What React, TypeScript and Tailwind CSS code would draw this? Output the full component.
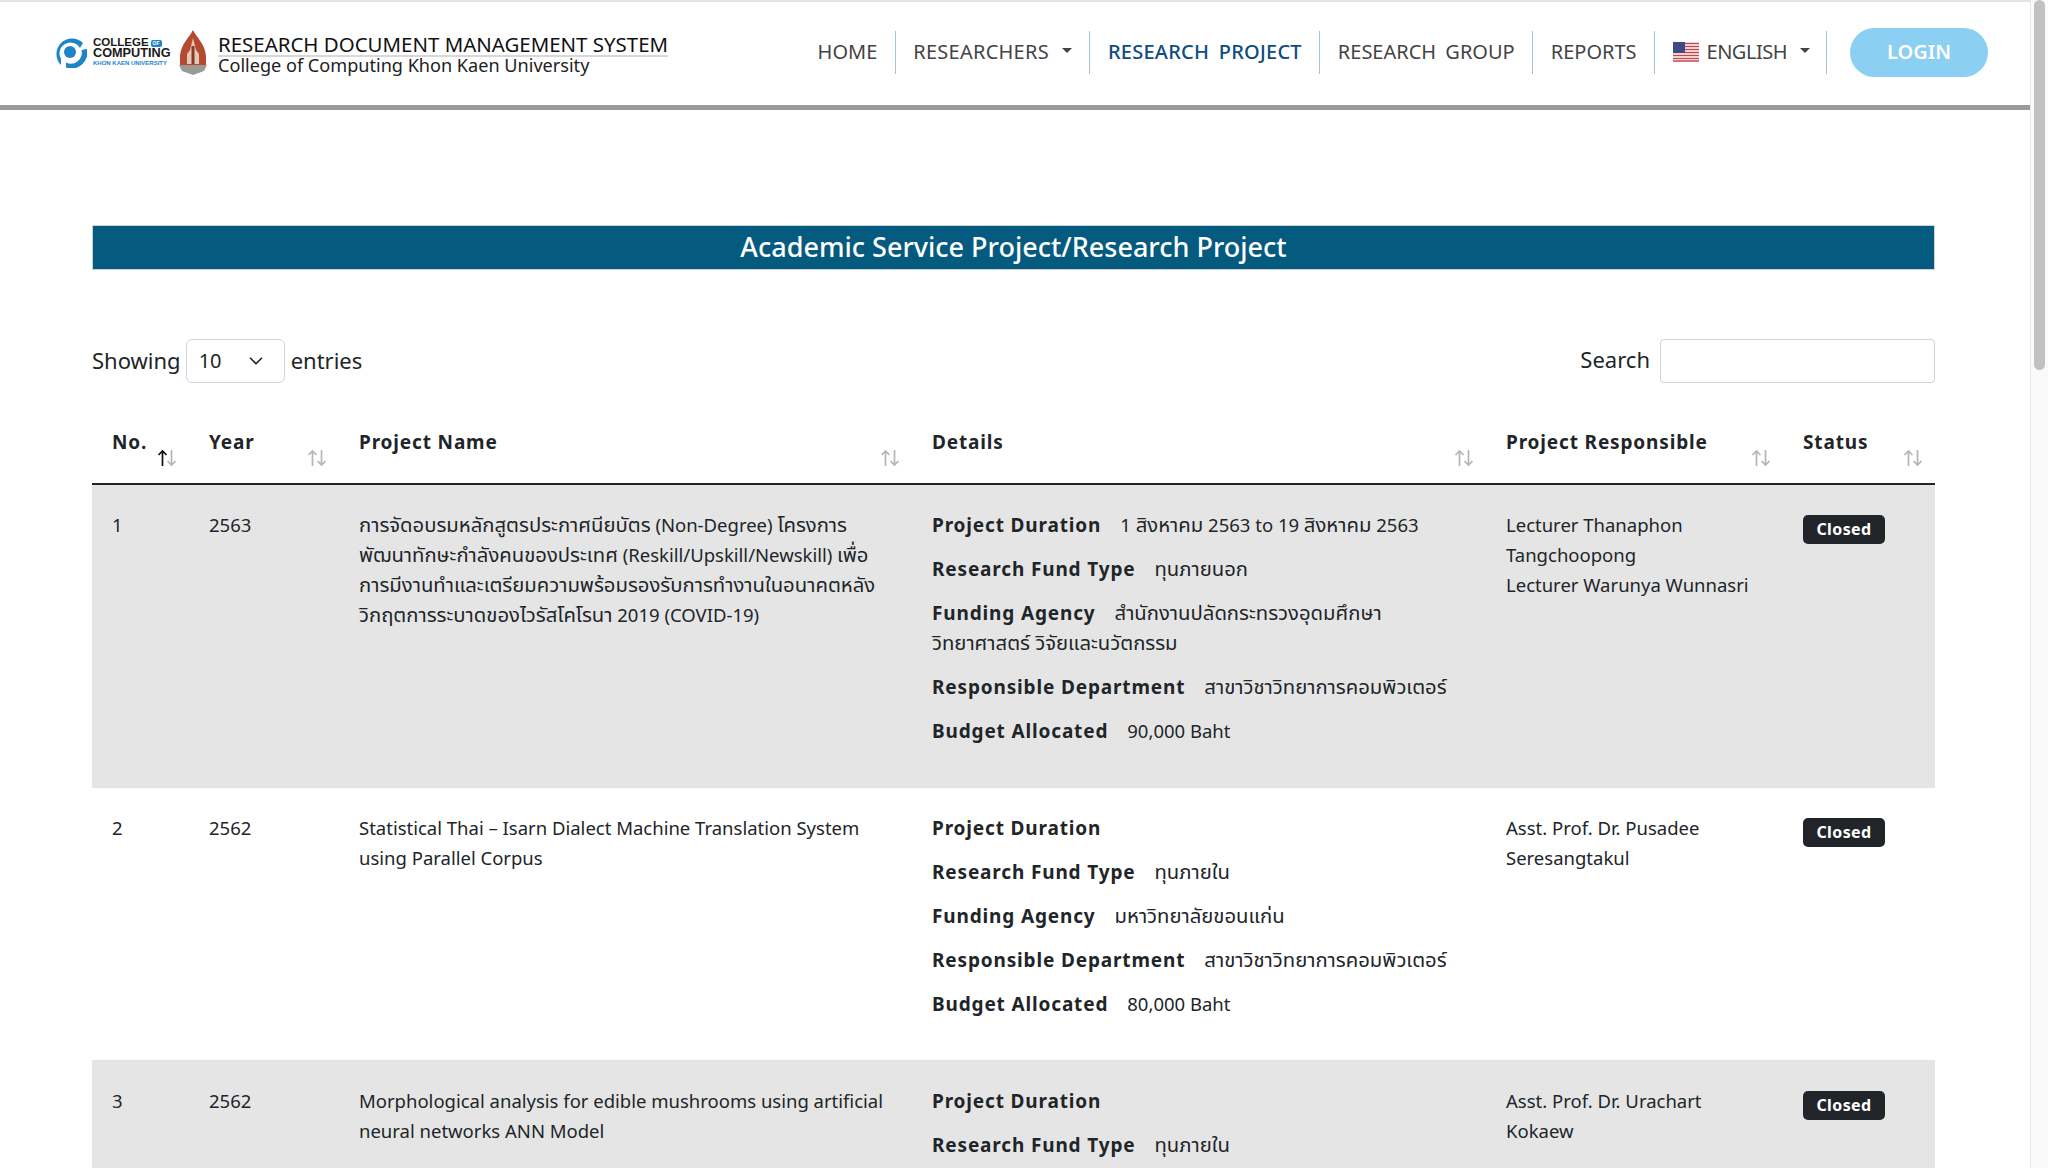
import { ChevronDown } from 'lucide-react'

const font = "font-['Noto_Sans','Noto_Sans_Thai','Liberation_Sans',sans-serif]"

const rows = [
  {
    no: '1',
    year: '2563',
    name: [
      'การจัดอบรมหลักสูตรประกาศนียบัตร (Non-Degree) โครงการ',
      'พัฒนาทักษะกำลังคนของประเทศ (Reskill/Upskill/Newskill) เพื่อ',
      'การมีงานทำและเตรียมความพร้อมรองรับการทำงานในอนาคตหลัง',
      'วิกฤตการระบาดของไวรัสโคโรนา 2019 (COVID-19)',
    ],
    details: [
      ['Project Duration', '1 สิงหาคม 2563 to 19 สิงหาคม 2563'],
      ['Research Fund Type', 'ทุนภายนอก'],
      ['Funding Agency', 'สำนักงานปลัดกระทรวงอุดมศึกษา วิทยาศาสตร์ วิจัยและนวัตกรรม'],
      ['Responsible Department', 'สาขาวิชาวิทยาการคอมพิวเตอร์'],
      ['Budget Allocated', '90,000 Baht'],
    ],
    people: ['Lecturer Thanaphon Tangchoopong', 'Lecturer Warunya Wunnasri'],
  },
  {
    no: '2',
    year: '2562',
    name: ['Statistical Thai – Isarn Dialect Machine Translation System', 'using Parallel Corpus'],
    details: [
      ['Project Duration', ''],
      ['Research Fund Type', 'ทุนภายใน'],
      ['Funding Agency', 'มหาวิทยาลัยขอนแก่น'],
      ['Responsible Department', 'สาขาวิชาวิทยาการคอมพิวเตอร์'],
      ['Budget Allocated', '80,000 Baht'],
    ],
    people: ['Asst. Prof. Dr. Pusadee Seresangtakul'],
  },
  {
    no: '3',
    year: '2562',
    name: ['Morphological analysis for edible mushrooms using artificial', 'neural networks ANN Model'],
    details: [
      ['Project Duration', ''],
      ['Research Fund Type', 'ทุนภายใน'],
    ],
    people: ['Asst. Prof. Dr. Urachart Kokaew'],
  },
]

// thai runs render smaller than in the reference font, so bump them up
function Mixed({ text }: { text: string }) {
  const parts = text.split(/([\u0E00-\u0E7F]+(?:\s[\u0E00-\u0E7F]+)*)/)
  return (
    <>
      {parts.map((p, i) =>
        /[\u0E00-\u0E7F]/.test(p) ? (
          <span key={i} className="text-[20.3px] leading-none">{p}</span>
        ) : (
          <span key={i}>{p}</span>
        ),
      )}
    </>
  )
}

function SortIcon({ active }: { active?: boolean }) {
  return (
    <svg width="22" height="18" viewBox="0 0 22 18" fill="none" strokeWidth="1.7" className="shrink-0 self-end mb-[2px]">
      <path d="M6.5 17V2M2.5 6 6.5 2l4 4" stroke={active ? '#111' : '#b5b5b5'} />
      <path d="M15.5 1v15M11.5 12l4 4 4-4" stroke="#b5b5b5" />
    </svg>
  )
}

function Logo() {
  return (
    <div className="flex items-center">
      <svg width="34" height="32" viewBox="0 0 34 32" className="shrink-0">
        <path d="M30 7A15.500 15.500 0 1 0 8 29V23A10 10 0 1 1 27 12Z" fill="#1d84c9" />
        <path d="M34 13A16 16 0 0 1 13 31.500V26.500A11 11 0 0 0 28.500 14Z" fill="#1d84c9" />
        <circle cx="17" cy="16" r="6" fill="#1d84c9" />
      </svg>
      <div className="ml-[6px] w-[77px] font-['Liberation_Sans',sans-serif] font-bold leading-none">
        <div className="flex items-center text-[11.500px] text-[#1a1a1a] h-[10px]">
          COLLEGE
          <span className="ml-[2px] bg-[#1d84c9] rounded-[2px] text-white text-[5px] px-[2px] h-[7px] leading-[7px]">OF</span>
        </div>
        <div className="text-[12.700px] text-[#1a1a1a] h-[11px] leading-[11px]">COMPUTING</div>
        <div className="text-[6px] text-[#1d84c9] mt-[1px] whitespace-nowrap">KHON KAEN UNIVERSITY</div>
      </div>
      <svg width="28" height="45" viewBox="0 0 28 45" className="ml-[9px] shrink-0">
        <path d="M14 0C18 8 26 14 27 26V36H1V26C2 14 10 8 14 0Z" fill="#b5492f" />
        <path d="M14 8l3 12 3 4v10H8V24l3-4Z" fill="#e5c9b8" />
        <path d="M12.500 16h3v18h-3Z" fill="#8c3a28" />
        <path d="M0 35h28l-3 6-11 4-11-4Z" fill="#9a9a96" />
      </svg>
      <div className="ml-[11px] text-[#222] pt-[3px]">
        <div className="text-[20.450px] leading-[22px] text-[#111] border-b-2 border-[#d8d8d8] whitespace-nowrap">
          RESEARCH DOCUMENT MANAGEMENT SYSTEM
        </div>
        <div className="text-[18.100px] leading-[17px] whitespace-nowrap">College of Computing Khon Kaen University</div>
      </div>
    </div>
  )
}

function NavItem({ label, active, caret, flag, extra }: { label: string; active?: boolean; caret?: boolean; flag?: boolean; extra?: string }) {
  return (
    <div className={`h-[43px] flex items-center px-[17.500px] text-[20px] [word-spacing:4px] whitespace-nowrap ${active ? 'font-medium text-[#0f4c81]' : 'text-[#444]'} ${extra ?? ''}`}>
      {flag && (
        <svg width="26" height="20" viewBox="0 0 26 20" className="mr-[8px]">
          <rect width="26" height="20" fill="#fff" />
          <path d="M0 1.500h26M0 4.500h26M0 7.500h26M0 10.500h26M0 13.500h26M0 16.500h26M0 19h26" stroke="#c8444c" strokeWidth="1.500" />
          <rect width="12" height="11" fill="#3c4a86" />
        </svg>
      )}
      {label}
      {caret && <span className="ml-[13px] mb-1 border-x-[5px] border-x-transparent border-t-[5px] border-t-[#444]" />}
    </div>
  )
}

export default function App() {
  return (
    <div className={`h-screen overflow-hidden flex bg-white text-[#212529] ${font}`}>
      <div className="flex-1 min-w-0 border-t-2 border-[#e4e4e4]">
        <header className="h-[108px] border-b-[5px] border-[#9a9a9a] flex items-center justify-between pl-[53px] pr-[42px] pb-[3px]">
          <Logo />
          <nav className="flex items-center">
            <NavItem label="HOME" />
            <div className="w-px h-[43px] bg-[#a9c2d6]" />
            <NavItem label="RESEARCHERS" caret extra="tracking-[0.25px]" />
            <div className="w-px h-[43px] bg-[#a9c2d6]" />
            <NavItem label="RESEARCH PROJECT" active extra="tracking-[0.25px]" />
            <div className="w-px h-[43px] bg-[#a9c2d6]" />
            <NavItem label="RESEARCH GROUP" />
            <div className="w-px h-[43px] bg-[#a9c2d6]" />
            <NavItem label="REPORTS" />
            <div className="w-px h-[43px] bg-[#a9c2d6]" />
            <NavItem label="ENGLISH" caret flag extra="tracking-[-0.5px] pr-[16px]" />
            <div className="w-px h-[43px] bg-[#a9c2d6]" />
            <button className="ml-[23px] w-[138px] h-[49px] rounded-full bg-[#8bd0f2] text-white font-semibold text-[20px]">LOGIN</button>
          </nav>
        </header>

        <main className="pl-[92px] pr-[95px] pt-[115px]">
          <h1 className="h-[45px] bg-[#045a7f] border border-[#c9d3d8] text-white text-center text-[27px] font-medium leading-[42px]">
            Academic Service Project/Research Project
          </h1>

          <div className="mt-[68px] h-[45px] flex items-center justify-between text-[22px]">
            <div className="flex items-center">
              <span>Showing</span>
              <div className="ml-[5px] mr-[6px] w-[99px] h-[44px] border border-[#ced4da] rounded-[6px] flex items-center justify-between pl-3 pr-[17px] text-[20px]">
                10
                <ChevronDown size={22} strokeWidth={1.8} />
              </div>
              <span>entries</span>
            </div>
            <div className="flex items-center">
              <span className="mb-[2px]">Search</span>
              <div className="ml-[10px] w-[275px] h-[44px] border border-[#ced4da] rounded-[4px] bg-white" />
            </div>
          </div>

          <table className="mt-[44px] w-full table-fixed border-collapse text-[18.500px] leading-[30px]">
            <colgroup>
              <col className="w-[97px]" />
              <col className="w-[150px]" />
              <col className="w-[573px]" />
              <col className="w-[574px]" />
              <col className="w-[297px]" />
              <col />
            </colgroup>
            <thead>
              <tr className="border-b-2 border-[#212529] text-left">
                {['No.', 'Year', 'Project Name', 'Details', 'Project Responsible', 'Status'].map((h, i) => (
                  <th key={h} className="p-0 pb-[14px] pl-5 pr-[11px] text-[19px] font-bold tracking-[0.85px]">
                    <div className="flex justify-between h-[42px]">
                      <span className="whitespace-nowrap">{h}</span>
                      <SortIcon active={i === 0} />
                    </div>
                  </th>
                ))}
              </tr>
            </thead>
            <tbody>
              {rows.map((r, i) => (
                <tr key={r.no} className={`align-top border-b border-[#dee2e6] last:h-[200px] ${i % 2 === 0 ? 'bg-[#e5e5e5]' : 'bg-white'}`}>
                  <td className="pl-5 pt-[25px]">{r.no}</td>
                  <td className="pl-5 pt-[25px]">{r.year}</td>
                  <td className="pl-5 pr-1 pt-[25px] whitespace-nowrap">
                    {r.name.map((line) => (
                      <div key={line}><Mixed text={line} /></div>
                    ))}
                  </td>
                  <td className="pl-5 pr-3 pt-[25px] pb-[27px]">
                    {r.details.map(([k, v]) => (
                      <p key={k} className="mb-[14px]">
                        <b className="text-[19px] leading-none font-bold tracking-[0.85px] mr-[19px]">{k}</b>
                        <Mixed text={v} />
                      </p>
                    ))}
                  </td>
                  <td className="pl-5 pr-3 pt-[25px]">
                    {r.people.map((p) => (
                      <div key={p}>{p}</div>
                    ))}
                  </td>
                  <td className="pl-5 pt-[28px]">
                    <span className="inline-block w-[82px] h-[29px] rounded-[5px] bg-[#212529] text-white text-center text-[16px] font-bold leading-[28px] tracking-[0.4px]">
                      Closed
                    </span>
                  </td>
                </tr>
              ))}
            </tbody>
          </table>
        </main>
      </div>

      <div className="w-[18px] shrink-0 bg-[#fafafa] border-l border-[#e8e8e8] flex justify-center">
        <div className="w-[11px] h-[370px] rounded-full bg-[#c1c1c1]" />
      </div>
    </div>
  )
}
